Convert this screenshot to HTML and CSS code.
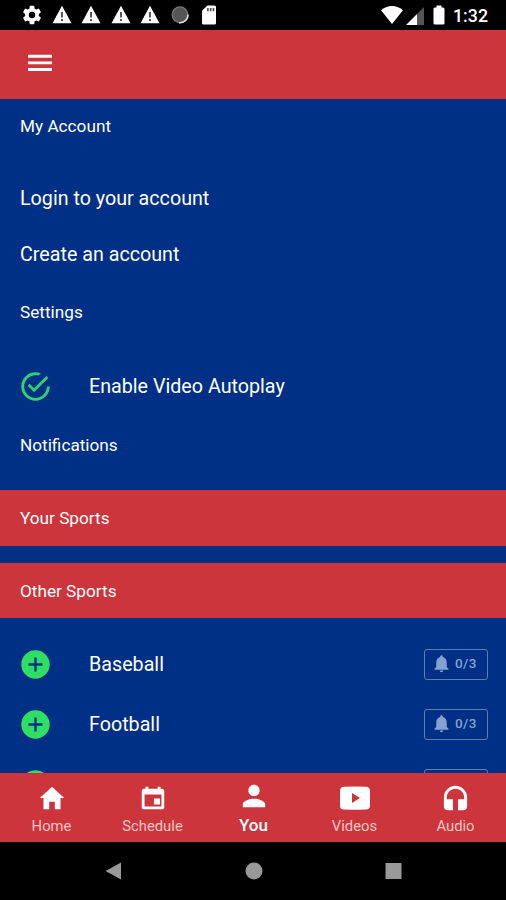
FILE: index.html
```
<!DOCTYPE html>
<html lang="en">
<head>
<meta charset="utf-8">
<title>You</title>
<link rel="stylesheet" href="styles.css">
</head>
<body>
<svg class="defs" aria-hidden="true">
  <symbol id="warning" viewBox="0 0 20 20"><path fill="#fff" d="M10 .7 19.5 18.2H.5z"/><path fill="#555" d="M9 7h2v5.5H9zm0 7h2v2H9z"/></symbol>
  <symbol id="add" viewBox="0 0 512 512"><path fill="#2fdf63" d="M256 48C141.125 48 48 141.125 48 256s93.125 208 208 208 208-93.125 208-208S370.875 48 256 48zm103 225h-86v86h-34v-86h-86v-34h86v-86h34v86h86z"/></symbol>
  <symbol id="bell" viewBox="0 0 24 24"><path fill="currentColor" d="M12 22c1.1 0 2-.9 2-2h-4c0 1.1.89 2 2 2zm6-6v-5c0-3.07-1.64-5.64-4.5-6.32V4c0-.83-.67-1.5-1.5-1.5s-1.5.67-1.5 1.5v.68C7.63 5.36 6 7.92 6 11v5l-2 2v1h16v-1l-2-2z"/></symbol>
</svg>
<div class="screen">
  <div class="status">
    <div class="status-left">
      <svg width="22" height="22" viewBox="0 0 24 24"><path fill="#fff" d="M19.43 12.98c.04-.32.07-.64.07-.98s-.03-.66-.07-.98l2.11-1.65c.19-.15.24-.42.12-.64l-2-3.46c-.12-.22-.39-.3-.61-.22l-2.49 1c-.52-.4-1.08-.73-1.69-.98l-.38-2.65C14.46 2.18 14.25 2 14 2h-4c-.25 0-.46.18-.49.42l-.38 2.65c-.61.25-1.17.59-1.69.98l-2.49-1c-.23-.09-.49 0-.61.22l-2 3.46c-.13.22-.07.49.12.64l2.11 1.65c-.04.32-.07.65-.07.98s.03.66.07.98l-2.11 1.65c-.19.15-.24.42-.12.64l2 3.46c.12.22.39.3.61.22l2.49-1c.52.4 1.08.73 1.69.98l.38 2.65c.03.24.24.42.49.42h4c.25 0 .46-.18.49-.42l.38-2.65c.61-.25 1.17-.59 1.69-.98l2.49 1c.23.09.49 0 .61-.22l2-3.46c.12-.22.07-.49-.12-.64l-2.11-1.65zM12 15.5a3.5 3.5 0 1 1 0-7 3.5 3.5 0 0 1 0 7z"/></svg>
      <svg width="20" height="20"><use href="#warning"/></svg>
      <svg width="20" height="20"><use href="#warning"/></svg>
      <svg width="20" height="20"><use href="#warning"/></svg>
      <svg width="20" height="20"><use href="#warning"/></svg>
      <svg width="20" height="20" viewBox="0 0 20 20"><circle cx="10" cy="9.7" r="7.8" fill="#555" stroke="#777" stroke-width="1.4"/><path d="M18 9.5A8 8 0 0 1 9 17.7" fill="none" stroke="#ddd" stroke-width="1.5"/></svg>
      <svg width="16" height="20" viewBox="0 0 16 20"><path fill="#fff" d="M6.3.5h7.2A1.500 1.500 0 0 1 15 2v16a1.500 1.500 0 0 1-1.500 1.500h-11A1.500 1.500 0 0 1 1 18V5.800z"/><path fill="#555" d="M6 3h1.700v3.200H6zm2.800 0h1.700v3.200H8.800zm2.800 0h1.700v3.200h-1.700z"/></svg>
    </div>
    <div class="status-right">
      <svg class="wifi" width="22" height="18" viewBox="0 0 22 18"><path fill="#fff" d="M0 4.200Q11-4.200 22 4.200L11 18z"/></svg>
      <svg class="signal" width="18" height="18" viewBox="0 0 18 18"><path fill="#fff" d="M0 18 11 7v11z"/><path fill="#555" d="m11 7 7-7v18h-7z"/></svg>
      <svg class="battery" width="12" height="20" viewBox="0 0 12 20"><path fill="#fff" d="M3.500.5h5v2H10a1.500 1.500 0 0 1 1.500 1.500v14a1.500 1.500 0 0 1-1.500 1.500H2A1.500 1.500 0 0 1 .5 18V4A1.500 1.500 0 0 1 2 2.500h1.500z"/></svg>
      <span class="time">1:32</span>
    </div>
  </div>
  <header class="toolbar"><svg width="24" height="18" viewBox="0 0 24 18"><path fill="#fff" d="M0 .8h24v2.900H0zm0 6.600h24v2.900H0zM0 14h24v2.900H0z"/></svg></header>
  <main class="content">
    <h2 class="heading">My Account</h2>
    <div class="group account">
      <div class="item"><span class="txt">Login to your account</span></div>
      <div class="item"><span class="txt">Create an account</span></div>
    </div>
    <h2 class="heading">Settings</h2>
    <div class="group settings">
      <div class="row">
        <svg class="lead" viewBox="0 0 512 512"><path fill="#2dd36f" d="M170.718 216.482 141.600 245.600l93.600 93.600 208-208-29.118-29.118L235.200 279.918zM422.400 256c0 91.518-74.883 166.400-166.400 166.400S89.600 347.518 89.600 256 164.482 89.600 256 89.600c15.600 0 31.200 2.082 45.764 6.241L334 62.600C310.161 53.300 283.500 48 256 48 141.600 48 48 141.600 48 256s93.600 208 208 208 208-93.600 208-208z"/></svg>
        <span class="txt">Enable Video Autoplay</span>
      </div>
    </div>
    <h2 class="heading notif">Notifications</h2>
    <h3 class="band">Your Sports</h3>
    <h3 class="band">Other Sports</h3>
    <div class="sports">
      <div class="row"><svg class="lead"><use href="#add"/></svg><span class="txt">Baseball</span><span class="badge"><svg width="21" height="21"><use href="#bell"/></svg>0/3</span></div>
      <div class="row"><svg class="lead"><use href="#add"/></svg><span class="txt">Football</span><span class="badge"><svg width="21" height="21"><use href="#bell"/></svg>0/3</span></div>
      <div class="row"><svg class="lead"><use href="#add"/></svg><span class="badge"></span></div>
    </div>
  </main>
  <nav class="tabs">
    <div class="tab"><svg width="30" height="30" viewBox="0 0 512 512"><path fill="#fff" d="M208 448V320h96v128h97.600V256H464L256 64 48 256h62.400v192z"/></svg><span>Home</span></div>
    <div class="tab"><svg width="30" height="30" viewBox="0 0 512 512"><path fill="#fff" d="M376 264H272v104h104zM336 64v32H176V64h-48v32h-24c-22 0-40 18-40 40v272c0 22 18 40 40 40h304c22 0 40-18 40-40V136c0-22-18-40-40-40h-24V64zm64 336H112V196h288z"/></svg><span>Schedule</span></div>
    <div class="tab active"><svg width="30" height="30" viewBox="0 0 512 512"><path fill="#fff" d="M256 256c52.800 0 96-43.200 96-96s-43.200-96-96-96-96 43.200-96 96 43.200 96 96 96zm0 48c-63.600 0-192 32.400-192 96v48h384v-48c0-63.600-128.400-96-192-96z"/></svg><span>You</span></div>
    <div class="tab"><svg width="30" height="30" viewBox="0 0 30 30"><path fill="#fff" fill-rule="evenodd" d="M4 3.800Q15 3.200 26 3.800q4 .2 4 4.200v14.500q0 3.800-4 4-11 .6-22 0-4-.2-4-4V8q0-4 4-4.200zM12 10v10l8-5z"/></svg><span>Videos</span></div>
    <div class="tab"><svg width="31" height="30" viewBox="0 0 24 23"><path fill="#fff" d="M12 2c-4.970 0-9 4.030-9 9v7c0 1.660 1.340 3 3 3h4v-8.500H5.300V11c0-3.700 3-6.700 6.700-6.700s6.700 3 6.700 6.700v1.500H14V21h4c1.660 0 3-1.340 3-3v-7c0-4.970-4.030-9-9-9z"/></svg><span>Audio</span></div>
  </nav>
  <div class="system">
    <svg width="17" height="18" viewBox="0 0 17 18"><path fill="#999" d="M16 .5v17L.5 9z"/></svg>
    <svg width="18" height="18" viewBox="0 0 18 18"><circle cx="9" cy="9" r="8.500" fill="#999"/></svg>
    <svg width="17" height="18" viewBox="0 0 17 18"><path fill="#999" d="M.5 1h16v16H.5z"/></svg>
  </div>
</div>
</body>
</html>
```
FILE: styles.css
```
* { box-sizing: border-box; }
body { margin: 0; background: #000; color: #fff; font-family: Roboto, sans-serif; }
svg { display: block; flex: none; }
.defs { position: absolute; width: 0; height: 0; }
.screen { width: 506px; height: 900px; display: flex; flex-direction: column; overflow: hidden; }
.status { height: 30px; flex: none; display: flex; justify-content: space-between; background: #000; }
.status-left { display: grid; grid-template-columns: repeat(7, 29.5px); justify-items: center; align-items: center; padding-left: 17.5px; }
.status-right { display: flex; align-items: center; padding-right: 18px; }
.wifi { margin-right: 3px; }
.signal { margin: 2px 9px 0 0; }
.battery { margin-right: 8px; }
.time { font-size: 17.8px; font-weight: 500; line-height: 30px; padding-top: 2px; width: 35px; white-space: nowrap; }
.toolbar { height: 68.5px; flex: none; background: #cb353b; padding: 24px 28px; }
.content { flex: 1; min-height: 0; overflow: hidden; background: #002f86; }
.heading, .band { margin: 0; height: 56px; line-height: 55px; padding-left: 20px; font-size: 17.2px; font-weight: 400; }
.group { padding-top: 16px; }
.account { padding-bottom: 2px; }
.settings { padding-bottom: 1px; }
.item { height: 56px; line-height: 56px; padding-left: 20px; }
.txt { font-size: 19.7px; }
.row { height: 60px; display: flex; align-items: center; padding: 0 18px 0 17.5px; }
.settings .row { height: 59px; }
.lead { width: 35px; height: 35px; margin-right: 36.5px; }
.heading.notif { line-height: 57px; margin-bottom: 17.5px; }
.band { height: 55.5px; line-height: 56px; background: #cb353b; margin-bottom: 17px; }
.sports { margin-top: -1px; }
.badge { margin-left: auto; width: 64px; height: 31px; border: 1.5px solid #5d7db5; border-radius: 3px; display: flex; align-items: center; padding: 0 0 2px 6px; gap: 3px; font-size: 13.5px; font-weight: 500; letter-spacing: .4px; color: #84a3d0; }
.tabs { height: 69px; flex: none; background: #cb353b; display: grid; grid-template-columns: repeat(5, 1fr); padding-left: 1px; }
.tab { display: flex; flex-direction: column; align-items: center; padding-top: 10px; font-size: 14.8px; line-height: 18px; color: #f6c5c2; }
.tab span { margin-top: 4px; }
.tab.active { padding-top: 8px; font-size: 17px; font-weight: 500; color: #fff; }
.tab.active span { margin-top: 5px; }
.system { height: 58px; flex: none; background: #000; display: flex; justify-content: space-between; align-items: center; padding: 0 104px 0 105px; }
```
